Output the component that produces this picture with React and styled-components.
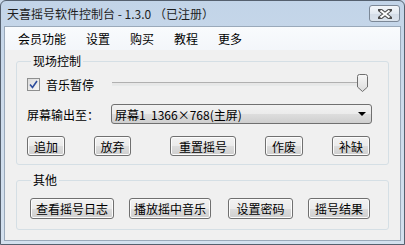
import React from 'react';
import styled, { createGlobalStyle } from 'styled-components';

const GlobalStyle = createGlobalStyle`
  html, body { margin: 0; padding: 0; background: #c9d8e9; }
  body {
    font-family: "Noto Sans CJK SC", "Noto Sans", "Liberation Sans", sans-serif;
    font-size: 12px;
    color: #000;
  }
`;

const Window = styled.div`
  width: 405px;
  height: 245px;
  box-sizing: border-box;
  border: 1px solid #55606e;
  border-radius: 6px 6px 0 0;
  background: linear-gradient(180deg, #c2d4e8 0%, #cddbeb 40%, #d3e0ee 100%);
  padding: 0 3px 3px 3px;
  display: flex;
  flex-direction: column;
`;

const TitleBar = styled.div`
  height: 25px;
  display: flex;
  justify-content: space-between;
  align-items: flex-start;
  padding-left: 3px;
`;

const Title = styled.div`
  line-height: 25px;
  font-size: 12px;
  color: #1e1e1e;
  white-space: pre;
`;

const CloseButton = styled.div`
  width: 31px;
  height: 17px;
  margin-top: 4px;
  margin-right: 1px;
  box-sizing: border-box;
  border: 1px solid #7c8897;
  border-radius: 3px;
  background: linear-gradient(180deg, #f4f7fa 0%, #e2e9f1 50%, #d3dce7 51%, #dbe3ec 100%);
  display: flex;
  align-items: center;
  justify-content: center;
`;

const Client = styled.div`
  flex: 1;
  background: #f0f0f0;
  border: 1px solid #9aa9ba;
  display: flex;
  flex-direction: column;
`;

const MenuBar = styled.div`
  height: 23px;
  display: flex;
  align-items: center;
  padding-left: 3px;
  background: linear-gradient(180deg, #f9fbfd 0%, #f3f6fa 100%);
`;

const MenuItem = styled.div`
  padding: 0 10px;
  line-height: 20px;
  font-size: 12px;
`;

const Body = styled.div`
  flex: 1;
  padding: 3px 0 0 11px;
  display: flex;
  flex-direction: column;
`;

const Group = styled.fieldset`
  width: 373px;
  box-sizing: border-box;
  margin: ${p => p.$top || 0}px 0 0 0;
  padding: 0 0 ${p => p.$bottom}px 10px;
  border: 1px solid #d5dfe5;
  border-radius: 3px;
  min-width: 0;
`;

const Legend = styled.legend`
  margin-left: 4px;
  padding: 0 2px;
  line-height: 16px;
  font-size: 12px;
`;

const Row = styled.div`
  display: flex;
  align-items: center;
  height: ${p => p.$h || 20}px;
  margin-top: ${p => p.$mt || 0}px;
`;

const CheckLabel = styled.label`
  width: 85px;
  display: flex;
  align-items: center;
  gap: 6px;
`;

const CheckBox = styled.span`
  width: 13px;
  height: 13px;
  box-sizing: border-box;
  border: 1px solid #8e8f8f;
  background: linear-gradient(135deg, #dcdcdc 0%, #f6f6f6 100%);
  display: flex;
  align-items: center;
  justify-content: center;
`;

const Slider = styled.div`
  position: relative;
  width: 256px;
  height: 20px;
`;

const Track = styled.div`
  position: absolute;
  left: 0;
  right: 4px;
  top: 8px;
  height: 2px;
  border-top: 1px solid #b0b0b0;
  border-bottom: 1px solid #e7eaea;
  background: #e7e7e7;
`;

const Thumb = styled.svg`
  position: absolute;
  left: 245px;
  top: 0;
`;

const FieldLabel = styled.div`
  width: 84px;
  font-size: 12px;
`;

const Combo = styled.div`
  width: 261px;
  height: 20px;
  box-sizing: border-box;
  border: 1px solid #707070;
  border-radius: 3px;
  background: linear-gradient(180deg, #f2f2f2 0%, #ebebeb 50%, #dddddd 51%, #cfcfcf 100%);
  display: flex;
  align-items: center;
  justify-content: space-between;
  padding: 0 5px 0 3px;
  font-size: 12px;
  white-space: pre;
`;

const Button = styled.button`
  width: ${p => p.$w}px;
  height: ${p => p.$h || 20}px;
  margin-left: ${p => p.$ml || 0}px;
  box-sizing: border-box;
  padding: 0;
  border: 1px solid #707070;
  border-radius: 3px;
  box-shadow: inset 0 0 0 1px #fcfcfc;
  background: linear-gradient(180deg, #f2f2f2 0%, #ebebeb 50%, #dddddd 51%, #cfcfcf 100%);
  font-family: inherit;
  font-size: 12px;
  color: #000;
`;

const controlButtons = [
  { label: '追加', w: 38, ml: 0 },
  { label: '放弃', w: 37, ml: 29 },
  { label: '重置摇号', w: 66, ml: 39 },
  { label: '作废', w: 38, ml: 29 },
  { label: '补缺', w: 38, ml: 29 },
];

const otherButtons = [
  { label: '查看摇号日志', w: 84, ml: 3 },
  { label: '播放摇中音乐', w: 82, ml: 15 },
  { label: '设置密码', w: 65, ml: 17 },
  { label: '摇号结果', w: 62, ml: 15 },
];

export default function App() {
  return (
    <>
      <GlobalStyle />
      <Window>
        <TitleBar>
          <Title>天喜摇号软件控制台 - 1.3.0 （已注册）</Title>
          <CloseButton>
            <svg width="14" height="10" viewBox="0 0 14 10">
              <path d="M2 1 L12 9 M12 1 L2 9" stroke="#4d4d4d" strokeWidth="4" strokeLinecap="square" />
              <path d="M2.5 1.5 L11.5 8.5 M11.5 1.5 L2.5 8.5" stroke="#ffffff" strokeWidth="2" />
            </svg>
          </CloseButton>
        </TitleBar>
        <Client>
          <MenuBar>
            <MenuItem>会员功能</MenuItem>
            <MenuItem>设置</MenuItem>
            <MenuItem>购买</MenuItem>
            <MenuItem>教程</MenuItem>
            <MenuItem>更多</MenuItem>
          </MenuBar>
          <Body>
            <Group $bottom={8}>
              <Legend>现场控制</Legend>
              <Row $mt={5}>
                <CheckLabel>
                  <CheckBox>
                    <svg width="9" height="9" viewBox="0 0 9 9">
                      <path d="M1 4.5 L3.5 7.5 L8 1" fill="none" stroke="#2c4c9c" strokeWidth="1.6" />
                    </svg>
                  </CheckBox>
                  音乐暂停
                </CheckLabel>
                <Slider>
                  <Track />
                  <Thumb width="11" height="18" viewBox="0 0 11 18">
                    <defs>
                      <linearGradient id="tg" x1="0" y1="0" x2="0" y2="1">
                        <stop offset="0" stopColor="#f7f7f7" />
                        <stop offset="1" stopColor="#dcdcdc" />
                      </linearGradient>
                    </defs>
                    <path d="M0.5 2.5 Q0.5 0.5 2.5 0.5 L8.5 0.5 Q10.5 0.5 10.5 2.5 L10.5 13 L5.5 17.5 L0.5 13 Z" fill="url(#tg)" stroke="#6f6f6f" />
                  </Thumb>
                </Slider>
              </Row>
              <Row $mt={10}>
                <FieldLabel>屏幕输出至：</FieldLabel>
                <Combo>
                  <span>屏幕1  1366×768(主屏)</span>
                  <svg width="8" height="4" viewBox="0 0 8 4">
                    <path d="M0 0 L8 0 L4 4 Z" fill="#000" />
                  </svg>
                </Combo>
              </Row>
              <Row $mt={12}>
                {controlButtons.map(b => (
                  <Button key={b.label} $w={b.w} $ml={b.ml}>{b.label}</Button>
                ))}
              </Row>
            </Group>
            <Group $top={7} $bottom={10}>
              <Legend>其他</Legend>
              <Row $mt={10} $h={21}>
                {otherButtons.map(b => (
                  <Button key={b.label} $w={b.w} $ml={b.ml} $h={21}>{b.label}</Button>
                ))}
              </Row>
            </Group>
          </Body>
        </Client>
      </Window>
    </>
  );
}
